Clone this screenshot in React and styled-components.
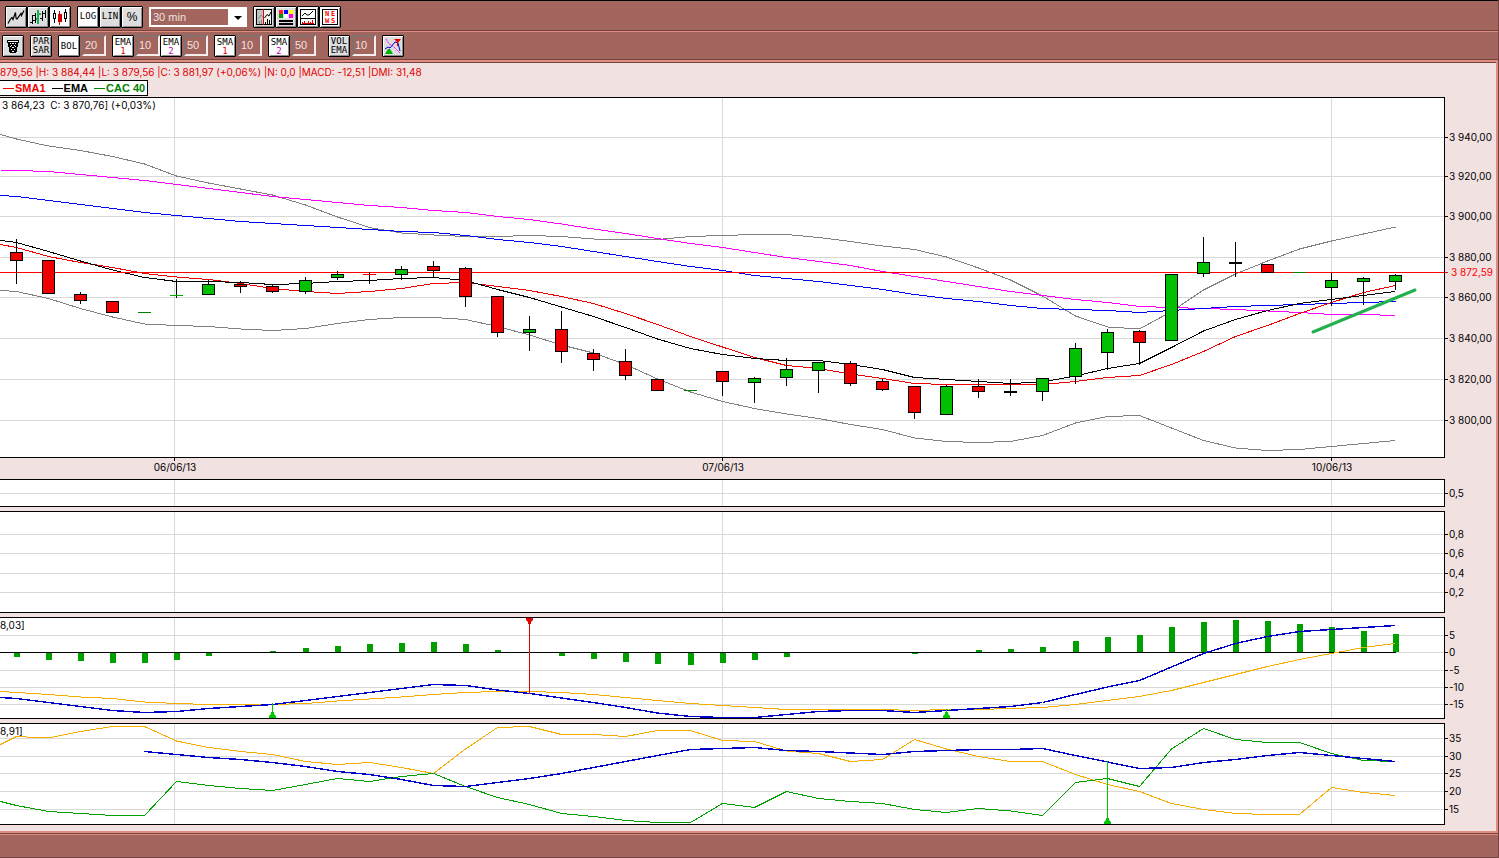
import React from "react";
import styled, { createGlobalStyle } from "styled-components";

const colors = {
  wood: "#a2665e",
  woodDark: "#73433d",
  woodLight: "#e08c80",
  paper: "#f1e1e1",
  grid: "#d8d8d8",
  up: "#00c000",
  down: "#f00000",
  bar: "#00a000",
  gold: "#f5ad00",
  navy: "#0000c8",
};

const figures = `10px Inter, "Liberation Sans", sans-serif`;

const xs = [
  0, 16, 48, 80, 112, 144, 176, 208, 240, 272, 305, 337, 369, 401, 433, 465,
  497, 529, 561, 593, 625, 657, 690, 722, 754, 786, 818, 850, 882, 914, 946,
  978, 1010, 1042, 1075, 1107, 1139, 1171, 1203, 1235, 1267, 1299, 1331, 1363,
  1395,
];
const days = [174, 722, 1331];

// x, high, body top, body bottom, low, colour
const candles = [
  [16, 239, 252, 260, 283, "down"],
  [48, 260, 260, 293, 293, "down"],
  [80, 292, 294, 300, 303, "down"],
  [112, 301, 301, 312, 312, "down"],
  [208, 280, 284, 294, 294, "up"],
  [240, 281, 284, 286, 292, "down"],
  [272, 285, 286, 291, 292, "down"],
  [305, 277, 280, 291, 293, "up"],
  [337, 271, 274, 277, 279, "up"],
  [401, 266, 269, 274, 279, "up"],
  [433, 261, 266, 270, 277, "down"],
  [465, 267, 268, 296, 306, "down"],
  [497, 296, 296, 332, 336, "down"],
  [529, 316, 329, 332, 350, "up"],
  [561, 311, 329, 351, 362, "down"],
  [593, 349, 353, 359, 370, "down"],
  [625, 349, 361, 375, 379, "down"],
  [657, 379, 379, 390, 390, "down"],
  [722, 371, 371, 381, 395, "down"],
  [754, 377, 378, 382, 402, "up"],
  [786, 358, 369, 377, 385, "up"],
  [818, 362, 362, 370, 392, "up"],
  [850, 361, 363, 383, 385, "down"],
  [882, 379, 381, 389, 390, "down"],
  [914, 386, 386, 412, 418, "down"],
  [946, 385, 386, 414, 414, "up"],
  [978, 379, 386, 391, 397, "down"],
  [1010, 379, 391, 392, 395, "flat"],
  [1042, 378, 378, 391, 400, "up"],
  [1075, 343, 348, 376, 383, "up"],
  [1107, 329, 332, 352, 369, "up"],
  [1139, 330, 331, 342, 364, "down"],
  [1171, 274, 274, 340, 340, "up"],
  [1203, 237, 262, 273, 276, "up"],
  [1235, 242, 262, 263, 276, "flat"],
  [1267, 264, 264, 272, 272, "down"],
  [1331, 273, 280, 287, 305, "up"],
  [1363, 277, 278, 281, 304, "up"],
  [1395, 274, 275, 281, 289, "up"],
];
// open equals close: x, y, colour, wick top, wick bottom
const dashes = [
  [144, 312, "#008000"],
  [176, 295, "#00b000", 279, 297],
  [369, 274, "#f00000", 272, 283],
  [690, 390, "#008000"],
  [1299, 272, "#008000"],
];

const bandTop = [
  134.5, 139, 146, 150.5, 156.5, 164, 176, 183, 189, 195, 205, 217, 227.5, 233,
  235, 236.5, 236.5, 235.5, 236.5, 239, 240, 239.5, 236.5, 235.5, 234.5, 234.5,
  237.5, 241.5, 246, 249.5, 257, 268, 280, 296, 316, 327, 329, 311.5, 290, 274,
  261, 249, 241, 234, 227,
];
const bandBottom = [
  290.5, 291.5, 298.5, 308.5, 317, 324, 325.5, 326.5, 329, 330.5, 328.5, 323.5,
  319.5, 317.5, 317.5, 319.5, 326.5, 335, 345, 353, 364.5, 379, 392, 401.5,
  408.5, 414, 418.5, 424.5, 429.5, 438, 441.5, 442.5, 441.5, 435.5, 423, 416.5,
  415.5, 428, 440.5, 448, 450.5, 449.5, 446.5, 443.5, 440.5,
];
const sma50 = [
  170.5, 170.5, 171.5, 174.5, 177.5, 180.5, 184.5, 188.5, 192.5, 196.5, 199.5,
  202.5, 205.5, 207.5, 210.5, 212.5, 216.5, 219.5, 224, 229, 233.5, 238.5,
  243.5, 247.5, 252.5, 257.5, 261.5, 265.5, 271.5, 276.5, 281.5, 286.5, 291.5,
  295.5, 299.5, 302.5, 306.5, 307.5, 308.5, 309.5, 311, 312.5, 314.5, 314.5,
  315.5,
];
const ema50 = [
  195.5, 196.5, 200.5, 204.5, 208.5, 212.5, 215.5, 218.5, 221.5, 223.5, 225.5,
  227.5, 229.5, 231.5, 232.5, 235.5, 239.5, 242.5, 246.5, 251.5, 256.5, 261.5,
  266.5, 270.5, 275.5, 278.5, 281.5, 285.5, 289.5, 294.5, 298.5, 301.5, 305.5,
  308.5, 309.5, 310.5, 312.5, 310.5, 308.5, 306.5, 305.5, 304.5, 303.5, 302.5,
  301.5,
];
const sma10 = [
  244.5, 247.5, 256.5, 262.5, 267.5, 273.5, 277, 279.5, 283.5, 288.5, 291.5,
  293.5, 291.5, 288.5, 283.5, 282.5, 286.5, 290.5, 296.5, 303.5, 313.5, 324.5,
  336.5, 347, 357.5, 365.5, 368.5, 374, 378.5, 383.5, 384.5, 384.5, 384.5,
  384.5, 381.5, 377.5, 375.5, 364.5, 351.5, 336.5, 325.5, 313.5, 302.5, 292.5,
  285.5,
];
const ema10 = [
  240.5, 242.5, 251.5, 261, 270, 277.5, 281.5, 281.5, 282.5, 284.5, 283.5,
  281.5, 280.5, 278.5, 277.5, 280.5, 289.5, 297.5, 307, 316.5, 327.5, 339,
  348.5, 354.5, 358.5, 360.5, 360.5, 364.5, 369.5, 377.5, 379.5, 381.5, 383.5,
  382, 376, 368.5, 363.5, 347.5, 331, 319.5, 310.5, 303.5, 299.5, 295.5, 291.5,
];

const signal = [
  691.5, 692.5, 694.5, 697, 698.5, 702, 703.5, 704.5, 704.5, 704.5, 703.5, 701,
  699, 697, 694.5, 692.5, 691.5, 691.5, 692.5, 694.5, 697.5, 700.5, 703.5,
  705.5, 707.5, 709.5, 709.5, 709.5, 709.5, 710.5, 709.5, 709.5, 708.5, 707.5,
  704.5, 700.5, 696.5, 690.5, 682.5, 674.5, 666.5, 659.5, 653.5, 647.5, 643.5,
];
const macd = [
  697.5, 698.5, 702.5, 706.5, 710.5, 712.5, 711.5, 708.5, 706.5, 704.5, 700.5,
  696.5, 692.5, 688.5, 684.5, 685.5, 690, 693.5, 698, 702.5, 707.5, 713, 716.5,
  717.5, 717.5, 714.5, 711.5, 710.5, 710.5, 712.5, 710.5, 708.5, 706.5, 702.5,
  694.5, 687, 680.5, 667, 653.5, 643.5, 636.5, 631.5, 629.5, 627.5, 625.5,
];
// end of each histogram bar, 0 where there is none
const histogram = [
  0, 657, 660, 661, 663, 663, 660, 656, 0, 651, 648, 646, 644, 643, 642, 644,
  650, 0, 656, 659, 662, 664, 665, 663, 660, 657, 0, 0, 0, 654, 0, 650, 649,
  647, 641, 637, 635, 627, 622, 620, 621, 624, 627, 631, 634,
];

const diMinus = [
  744.5, 736.5, 738, 731.5, 726.5, 726.5, 741, 747.5, 751.5, 754.5, 761.5,
  764.5, 762.5, 767.5, 773.5, 749, 727.5, 726.5, 734.5, 734.5, 736.5, 730.5,
  730.5, 740.5, 741.5, 751, 753.5, 761.5, 759.5, 739.5, 749, 756.5, 761.5,
  761.5, 774.5, 784.5, 791.5, 803.5, 809.5, 813.5, 814.5, 814.5, 787.5, 792.5,
  795.5,
];
const diPlus = [
  801.5, 805.5, 811.5, 813.5, 815.5, 815.5, 781.5, 785.5, 788.5, 790.5, 784.5,
  778.5, 781.5, 776.5, 773.5, 786.5, 797.5, 804.5, 813.5, 816.5, 820.5, 822.5,
  822.5, 803.5, 807.5, 791.5, 798.5, 801.5, 803.5, 809.5, 812.5, 808.5, 811,
  815.5, 782.5, 778.5, 786.5, 749, 728.5, 739.5, 742.5, 742.5, 753.5, 760.5,
  761.5,
];
const adx = [
  751.5, 754.5, 757.5, 759.5, 762.5, 766.5, 771.5, 774.5, 779.5, 785.5, 786.5,
  782.5, 778.5, 773.5, 767.5, 761.5, 755.5, 749.5, 748.5, 747.5, 750.5, 751.5,
  753, 754.5, 751.5, 750.5, 749.5, 749.5, 748.5, 755.5, 762, 768.5, 767.5,
  762.5, 759.5, 755.5, 752.5, 755.5, 758.5, 761.5,
];

const priceTicks = [
  [137, "3 940,00"],
  [176, "3 920,00"],
  [216, "3 900,00"],
  [257, "3 880,00"],
  [297, "3 860,00"],
  [338, "3 840,00"],
  [379, "3 820,00"],
  [420, "3 800,00"],
];

const Line = ({ values, color, from = 0, width = 1 }) => (
  <polyline
    points={values.map((y, i) => `${xs[i + from] + 0.5},${y}`).join(" ")}
    fill="none"
    stroke={color}
    strokeWidth={width}
    shapeRendering="crispEdges"
  />
);

const Marker = ({ x, tip, base, color }) => {
  const dir = base > tip ? -1 : 1;
  return (
    <g fill={color} stroke="none">
      <rect x={x} y={Math.min(tip, base)} width="1" height={Math.abs(base - tip)} />
      <path
        d={`M${x - 3} ${base}h7v${dir * 2}l-2 ${dir * 2}v${dir * 2}h-3v${-dir * 2}l-2 ${-dir * 2}z`}
      />
    </g>
  );
};

const Panel = ({ top, height, ticks, caption, price, children, label }) => (
  <PanelRow $height={height}>
    <Plot>
      <PlotSvg
        viewBox={`0 ${top} 1445 ${height}`}
        preserveAspectRatio="none"
        role="img"
        aria-label={label}
      >
        <rect x="0" y={top} width="1445" height={height} fill="#fff" />
        <g fill={colors.grid}>
          {ticks.map(([y]) => (
            <rect key={y} x="0" y={y} width="1444" height="1" />
          ))}
          {days.map((x) => (
            <rect key={x} x={x} y={top} width="1" height={height} />
          ))}
        </g>
        {children}
        <path
          d={`M0 ${top + 0.5}H1444.5V${top + height - 0.5}H0`}
          fill="none"
          stroke="#000"
          shapeRendering="crispEdges"
        />
      </PlotSvg>
      {caption && <Caption $cut={!price}>{caption}</Caption>}
    </Plot>
    <Axis viewBox={`1445 ${top} 51 ${height}`}>
      {ticks.map(([y, text]) => (
        <g key={y}>
          <rect x="1445" y={y} width="3" height="1" />
          <text x="1449" y={y + 4}>
            {text}
          </text>
        </g>
      ))}
      {price && (
        <g fill="#f00">
          <rect x="1445" y="272" width="3" height="1" />
          <text x="1451" y="276">
            3 872,59
          </text>
        </g>
      )}
    </Axis>
  </PanelRow>
);

const Icon = ({ children, smooth }) => (
  <svg
    width="18"
    height="18"
    viewBox="0 0 18 18"
    shapeRendering={smooth ? "auto" : "crispEdges"}
    aria-hidden="true"
  >
    {children}
  </svg>
);

const LineIcon = () => (
  <Icon smooth>
    <path
      d="M1 15.500l2.500-4.500 1.500-1.500 1 2L8.500 4.500l.5 5.500 1 1 4-5.500.5 2 2.500-5"
      fill="none"
      stroke="#000"
      strokeWidth="1.200"
    />
  </Icon>
);
const BarsIcon = () => (
  <Icon>
    <path d="M1 14h2v1h-2zM3 7h1v9h-1zM4 7h3v1h-3zM6 5h1v10h-1zM4 12h2v1h-2z" />
    <path d="M8 2h2v14h-2zM7 10h2v2h-2zM10 5h2v2h-2z" fill="#1fae58" />
    <path d="M13 3h1v10h-1zM11 10h2v1h-2zM14 5h2v1h-2zM16 2v8h1v-8z" />
  </Icon>
);
const CandlesIcon = () => (
  <Icon>
    <path d="M3 2h1v3h-1zM3 11h1v4h-1zM14 1h1v3h-1zM14 11h1v3h-1z" />
    <path d="M2 5h3v6h-3zM13 4h3v7h-3z" />
    <path d="M3 6h1v4h-1zM14 5h1v5h-1z" fill="#fff" />
    <path d="M8 3h1v14h-1zM7 6h4v8h-4z" fill="#d00000" />
  </Icon>
);
const SplitIcon = () => (
  <Icon smooth>
    <rect x="1.500" y="1.500" width="15" height="15" fill="#f2f2f2" stroke="#000" />
    <rect x="2" y="2" width="6" height="14" fill="#c0c0c0" />
    <path d="M3 11l3-4 2 2M4.500 13v3M6.500 12v4" fill="none" stroke="#888" />
    <path d="M8.500 1v16" stroke="#e00000" />
    <path d="M9.500 10L12 6.500l2 1.500 2-4M10.500 14v2M12.500 11v5M14.500 12v4" fill="none" stroke="#000" />
  </Icon>
);
const PaletteIcon = () => (
  <Icon>
    <path d="M2 2h4v4h-4z" fill="#f22" />
    <path d="M7 2h4v4h-4z" fill="#00f" />
    <path d="M12 2h4v4h-4z" fill="#ff0" />
    <path d="M2 6h4v4h-4z" fill="#090" />
    <path d="M7 6h4v4h-4z" fill="#fff" />
    <path d="M12 6h4v4h-4z" fill="#f0f" />
    <path d="M2 12h14v2h-14zM2 15h14v2h-14z" fill="#000" />
  </Icon>
);
const VolumeIcon = () => (
  <Icon smooth>
    <rect x="1.500" y="1.500" width="15" height="15" fill="#fff" stroke="#000" />
    <path d="M1 10.500h16" stroke="#000" />
    <path d="M3 8l3-3 2 2h2l4-4" fill="none" stroke="#000" />
    <path
      d="M3.500 14v2M5.500 13v3M7.500 15v1M9.500 13v3M11.500 14v2M13.500 12v4M3 15.500h12"
      stroke="#e00000"
    />
  </Icon>
);
const NewsIcon = () => (
  <Icon>
    <rect x="1.500" y="1.500" width="15" height="15" fill="#fff" stroke="#000" />
    <g fill="#f00" fontFamily="DejaVu Sans Mono, monospace" fontWeight="bold" fontSize="7">
      <text x="4" y="8">N</text>
      <text x="10" y="8">E</text>
      <text x="4" y="15">W</text>
      <text x="10" y="15">S</text>
    </g>
  </Icon>
);
const BinIcon = () => (
  <Icon>
    <path d="M3 3h12v3h-1v4h-1v5h-1v1h-6v-1h-1v-5h-1v-4h-1z" />
    <path
      d="M4 4h10v1h-10zM6 6h1v1h-1zM8 6h2v1h-2zM11 6h1v1h-1zM7 8h1v1h-1zM10 8h1v1h-1zM6 9h1v1h-1zM8 10h2v1h-2zM11 9h1v1h-1zM7 12h1v1h-1zM10 12h1v1h-1zM8 14h2v1h-2z"
      fill="#fff"
    />
  </Icon>
);
const SignalsIcon = () => (
  <Icon smooth>
    <path d="M2 2l3 5 4 2 4 4 3 3" fill="none" stroke="#f0f" strokeDasharray="2 1" />
    <path d="M1 12l3-2 2 1 5-6 3 1 2 8" fill="none" stroke="#00c" />
    <path d="M10 2h7l-3 4zM13 5h1v4h-1z" fill="#e00000" />
    <path d="M1 17h8l-3-5h-2z" fill="#00b000" />
  </Icon>
);

const TextKey = ({ lines, tone, off }) => (
  <ToolButton type="button" $off={off} $low={Boolean(tone)}>
    {lines.map((line, i) => (
      <KeyLine key={line} $color={i === 1 ? tone : undefined}>
        {line}
      </KeyLine>
    ))}
  </ToolButton>
);

const Period = ({ lines, tone, value, off }) => (
  <PeriodPair>
    <TextKey lines={lines} tone={tone} off={off} />
    <PeriodInput type="text" defaultValue={value} aria-label={`${lines.join(" ")} period`} />
  </PeriodPair>
);

const App = () => (
  <Page>
    <GlobalStyle />
    <Toolbar $first>
      <Group>
        <ToolButton type="button" $off aria-label="Line"><LineIcon /></ToolButton>
        <ToolButton type="button" $off aria-label="Bars"><BarsIcon /></ToolButton>
        <ToolButton type="button" aria-label="Candlesticks"><CandlesIcon /></ToolButton>
      </Group>
      <Group>
        <TextKey lines={["LOG"]} />
        <TextKey lines={["LIN"]} off />
        <ToolButton type="button" $off><Percent>%</Percent></ToolButton>
      </Group>
      <SelectBox>
        <Select aria-label="Interval" defaultValue="30 min">
          <option>30 min</option>
          <option>60 min</option>
        </Select>
        <Arrow viewBox="0 0 8 4" aria-hidden="true">
          <path d="M0 0h8l-4 4z" />
        </Arrow>
      </SelectBox>
      <Group>
        <ToolButton type="button" $off aria-label="Split view"><SplitIcon /></ToolButton>
        <ToolButton type="button" $off aria-label="Colours"><PaletteIcon /></ToolButton>
        <ToolButton type="button" aria-label="Volume"><VolumeIcon /></ToolButton>
        <ToolButton type="button" aria-label="News"><NewsIcon /></ToolButton>
      </Group>
    </Toolbar>
    <Toolbar>
      <ToolButton type="button" $off aria-label="Delete"><BinIcon /></ToolButton>
      <TextKey lines={["PAR", "SAR"]} off />
      <Period lines={["BOL"]} value="20" />
      <Period lines={["EMA", "1"]} tone="#e00000" value="10" />
      <Flush>
        <Period lines={["EMA", "2"]} tone="#c000c0" value="50" />
      </Flush>
      <Period lines={["SMA", "1"]} tone="#e00000" value="10" />
      <Period lines={["SMA", "2"]} tone="#c000c0" value="50" />
      <Spaced>
        <Period lines={["VOL", "EMA"]} value="10" off />
      </Spaced>
      <ToolButton type="button" $off aria-label="Signals"><SignalsIcon /></ToolButton>
    </Toolbar>
    <Main>
      <Quote>
        879,56 |H: 3 884,44 |L: 3 879,56 |C: 3 881,97 (+0,06%) |N: 0,0 |MACD: -12,51 |DMI: 31,48
      </Quote>
      <Legend>
        <LegendItem $color="#f00000">SMA1</LegendItem>
        <LegendItem $color="#000">EMA</LegendItem>
        <LegendItem $color="#008000">CAC 40</LegendItem>
      </Legend>
      <Panel
        top={97}
        height={361}
        ticks={priceTicks}
        caption="3 864,23&nbsp; C: 3 870,76] (+0,03%)"
        price
        label="CAC 40 candlesticks"
      >
        <Line values={bandTop} color="#808080" />
        <Line values={bandBottom} color="#808080" />
        <Line values={sma50} color="#f0f" />
        <Line values={ema50} color="#00f" />
        <Line values={sma10} color="#f00000" />
        <Line values={ema10} color="#000" />
        <rect x="0" y="272" width="1444" height="1" fill="#f00" />
        {candles.map(([x, high, top, bottom, low, kind]) => (
          <g key={x}>
            <rect x={x} y={high} width="1" height={low - high + 1} />
            <rect x={x - 6} y={top} width="13" height={bottom - top + 1} />
            {kind !== "flat" && (
              <rect x={x - 5} y={top + 1} width="11" height={bottom - top - 1} fill={colors[kind]} />
            )}
          </g>
        ))}
        {dashes.map(([x, y, color, high, low]) => (
          <g key={x}>
            {high && <rect x={x} y={high} width="1" height={low - high + 1} />}
            <rect x={x - 6} y={y} width="13" height="1" fill={color} />
          </g>
        ))}
        <path d="M1313 332L1415 290" stroke="#22b14c" strokeWidth="3" strokeLinecap="round" />
      </Panel>
      <DateAxis>
        <DateSvg viewBox="0 458 1445 21" preserveAspectRatio="xMinYMin meet">
          {["06/06/13", "07/06/13", "10/06/13"].map((text, i) => (
            <g key={text}>
              <rect x={days[i]} y="458" width="1" height="3" />
              <text x={days[i] + 1} y="471" textAnchor="middle">
                {text}
              </text>
            </g>
          ))}
        </DateSvg>
      </DateAxis>
      <Panel top={479} height={28} ticks={[[493, "0,5"]]} label="Volume" />
      <Panel
        top={511}
        height={102}
        ticks={[[534, "0,8"], [553, "0,6"], [573, "0,4"], [592, "0,2"]]}
        label="Volume average"
      />
      <Panel
        top={617}
        height={102}
        ticks={[[635, "5"], [652, "0"], [670, "-5"], [687, "-10"], [704, "-15"]]}
        caption="8,03]"
        label="MACD"
      >
        {histogram.map(
          (y, i) =>
            y > 0 && (
              <rect
                key={xs[i]}
                x={xs[i] - 2}
                y={Math.min(y, 652)}
                width="6"
                height={Math.abs(652 - y)}
                fill={colors.bar}
              />
            )
        )}
        <rect x="0" y="652" width="1396" height="1" />
        <Line values={signal} color={colors.gold} />
        <Line values={macd} color={colors.navy} width={1.4} />
        <Marker x={529} tip={694} base={618} color="#e00000" />
        <Marker x={272} tip={703} base={718} color="#00c800" />
        <Marker x={946} tip={709} base={718} color="#00c800" />
      </Panel>
      <Panel
        top={723}
        height={102}
        ticks={[[738, "35"], [756, "30"], [773, "25"], [791, "20"], [809, "15"]]}
        caption="8,91]"
        label="DMI"
      >
        <Line values={diMinus} color={colors.gold} />
        <Line values={diPlus} color={colors.bar} />
        <Line values={adx} color={colors.navy} from={5} width={1.4} />
        <Marker x={1107} tip={761} base={824} color="#00c800" />
      </Panel>
    </Main>
    <Footer />
  </Page>
);

const GlobalStyle = createGlobalStyle`
  body {
    margin: 0;
    background: ${colors.wood};
    font-family: "Liberation Sans", Arial, sans-serif;
    font-size: 11px;
    color: #000;
  }
`;

const Page = styled.div`
  display: flex;
  flex-direction: column;
  min-height: 100vh;
  box-sizing: border-box;
  border-right: 1px solid ${colors.woodDark};
  overflow: hidden;
`;

const Toolbar = styled.div`
  display: flex;
  align-items: center;
  gap: 6px;
  box-sizing: border-box;
  height: ${(props) => (props.$first ? "31px" : "29px")};
  padding: ${(props) => (props.$first ? "2px 5px 0" : "1px 2px 0")};
  background: ${colors.wood};
  border-top: ${(props) => (props.$first ? "1px solid #000" : `1px solid ${colors.woodLight}`)};
  border-bottom: 1px solid ${colors.woodDark};
`;

const Group = styled.div`
  display: flex;
`;

const Flush = styled.div`
  margin-left: -6px;
`;

const Spaced = styled.div`
  margin: 0 0 0 6px;
`;

const ToolButton = styled.button`
  display: flex;
  flex-direction: column;
  align-items: center;
  justify-content: center;
  flex: none;
  box-sizing: border-box;
  width: 22px;
  height: 22px;
  padding: ${(props) => (props.$low ? "2px 0 0" : "0")};
  border: 1px solid #000;
  border-radius: 1px;
  background: ${(props) => (props.$off ? "#dedede" : "#fff")};
  box-shadow: inset 1px 1px #fff, inset -1px -1px #8c8c8c;
`;

const KeyLine = styled.span`
  font-family: "DejaVu Sans Mono", monospace;
  font-size: 9px;
  line-height: 9px;
  color: ${(props) => props.$color || "#000"};
`;

const Percent = styled.span`
  font-family: "Liberation Sans", Arial, sans-serif;
  font-size: 12px;
  line-height: 16px;
  color: #000;
`;

const SelectBox = styled.div`
  position: relative;
  width: 98px;
  height: 20px;
`;

const Select = styled.select`
  appearance: none;
  box-sizing: border-box;
  width: 100%;
  height: 100%;
  padding: 0 2px;
  border: 2px solid #fff;
  border-right-width: 19px;
  border-radius: 0;
  background: ${colors.wood};
  color: #f1e1e1;
  font-family: inherit;
  font-size: 11px;
`;

const Arrow = styled.svg`
  position: absolute;
  right: 5px;
  top: 9px;
  width: 8px;
  height: 4px;
  pointer-events: none;
`;

const PeriodPair = styled.div`
  display: flex;
  gap: 2px;
`;

const PeriodInput = styled.input`
  box-sizing: border-box;
  width: 24px;
  height: 21px;
  padding: 0 1px 1px;
  border: 2px solid;
  border-color: #85706d #f5eded #f5eded #85706d;
  background: ${colors.wood};
  color: #f1e1e1;
  font-family: inherit;
  font-size: 11px;
`;

const Main = styled.main`
  display: flex;
  flex-direction: column;
  background: ${colors.paper};
  border-top: 2px solid ${colors.woodLight};
  border-right: 2px solid ${colors.woodLight};
  border-bottom: 2px solid ${colors.woodLight};
  box-shadow: inset 0 1px ${colors.woodDark};
  padding-bottom: 6px;
`;

const Quote = styled.div`
  box-sizing: border-box;
  height: 18px;
  padding-top: 2px;
  font: ${figures};
  line-height: 17px;
  color: #e00000;
  white-space: nowrap;
`;

const Legend = styled.div`
  display: flex;
  align-items: center;
  align-self: flex-start;
  gap: 6px;
  box-sizing: border-box;
  height: 16px;
  padding: 0 2px 0 3px;
  border: 1px solid #000;
  border-left: 0;
  background: #fff;
`;

const LegendItem = styled.span`
  display: flex;
  align-items: center;
  gap: 1px;
  font-weight: bold;
  color: ${(props) => props.$color};

  &::before {
    content: "";
    width: 11px;
    height: 1px;
    background: currentColor;
  }
`;

const PanelRow = styled.section`
  display: flex;
  height: ${(props) => props.$height}px;

  ${Legend} + & {
    margin-top: 1px;
  }

  & + & {
    margin-top: 4px;
  }
`;

const Plot = styled.div`
  position: relative;
  flex: 1;
  min-width: 0;
`;

const PlotSvg = styled.svg`
  display: block;
  width: 100%;
  height: 100%;
`;

const Axis = styled.svg`
  flex: none;
  width: 51px;
  height: 100%;
  font: ${figures};
`;

const Caption = styled.div`
  position: absolute;
  top: 2px;
  left: ${(props) => (props.$cut ? "0" : "2px")};
  font: ${figures};
  line-height: 13px;
`;

const DateAxis = styled.div`
  height: 21px;
  padding-right: 51px;
`;

const DateSvg = styled.svg`
  display: block;
  width: 100%;
  height: 100%;
  font: ${figures};
`;

const Footer = styled.footer`
  flex: 1;
  background: ${colors.wood};
  border-top: 1px solid ${colors.woodDark};
  border-bottom: 1px solid ${colors.woodDark};
  box-shadow: inset 0 1px ${colors.woodLight};
`;

export default App;
